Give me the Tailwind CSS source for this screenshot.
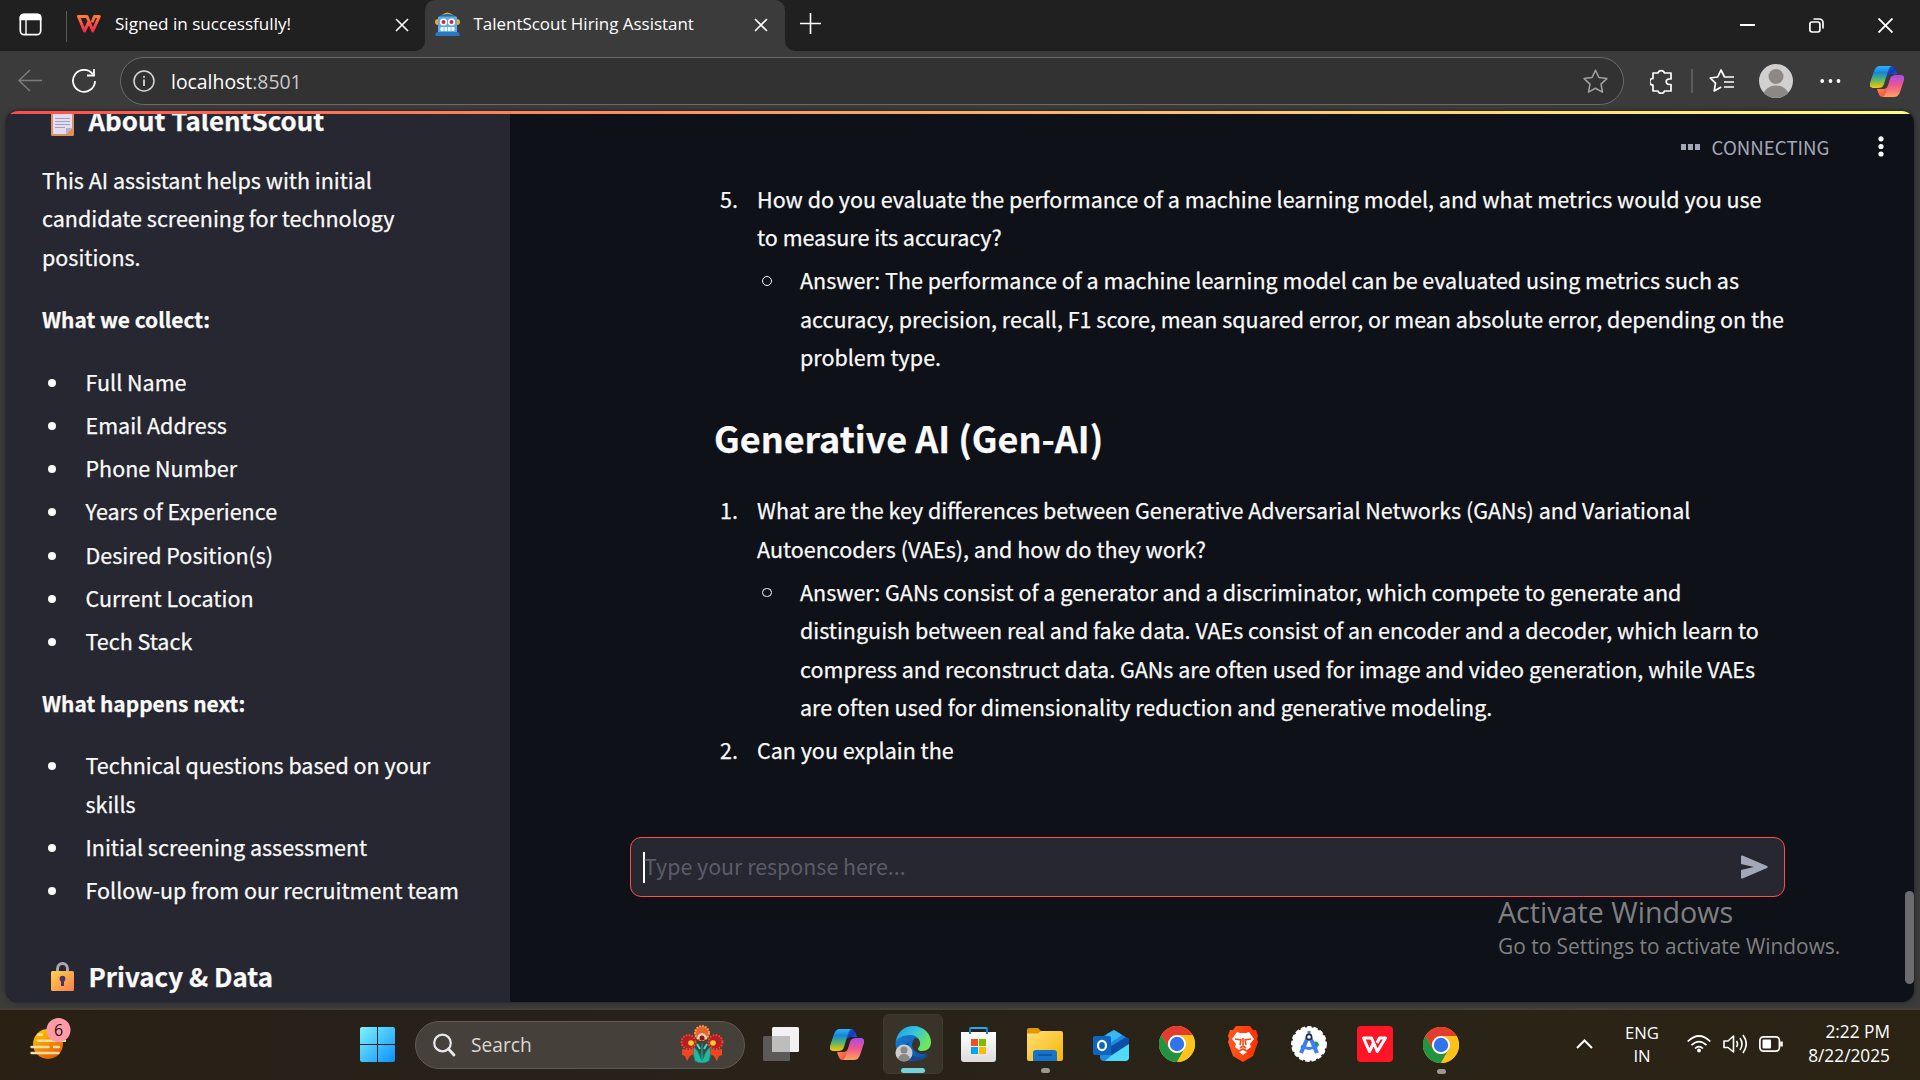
<!DOCTYPE html>
<html lang="en">
<head>
<meta charset="utf-8">
<title>TalentScout Hiring Assistant</title>
<script src="https://cdn.jsdelivr.net/npm/@tailwindcss/browser@4"></script>
</head>
<body class="flex h-[1080px] w-[1920px] flex-col overflow-hidden bg-[#3b3b3b] font-['Open_Sans',sans-serif] text-white">

<svg class="absolute size-0" aria-hidden="true">
  <defs>
    <linearGradient id="cpA" x1="0" y1="0" x2="0" y2="1"><stop offset="0" stop-color="#2fb4f5"/><stop offset=".3" stop-color="#1585dc"/><stop offset=".62" stop-color="#58b56b"/><stop offset="1" stop-color="#ffc800"/></linearGradient>
    <linearGradient id="cpB" x1="0" y1="0" x2="0" y2="1"><stop offset="0" stop-color="#a44cf0"/><stop offset=".45" stop-color="#ee5590"/><stop offset="1" stop-color="#ffa060"/></linearGradient>
    <linearGradient id="cpC" x1="0" y1="0" x2="1" y2="1"><stop offset="0" stop-color="#1670e0"/><stop offset=".5" stop-color="#1438b8"/><stop offset="1" stop-color="#3a66f0"/></linearGradient>
    <linearGradient id="cpD" x1="0" y1="0" x2="1" y2="1"><stop offset="0" stop-color="#ff9a5c"/><stop offset="1" stop-color="#f0403c"/></linearGradient>
    <linearGradient id="win" gradientUnits="userSpaceOnUse" x1="0" y1="0" x2="35" y2="35"><stop offset="0" stop-color="#7df3ff"/><stop offset="1" stop-color="#0a90ff"/></linearGradient>
    <linearGradient id="sun" x1="0" y1="0" x2=".6" y2="1"><stop offset="0" stop-color="#ffd400"/><stop offset="1" stop-color="#e85e00"/></linearGradient>
    <linearGradient id="lock" x1="0" y1="0" x2="1" y2="1"><stop offset="0" stop-color="#ffd24a"/><stop offset="1" stop-color="#f97d4e"/></linearGradient>
    <linearGradient id="edgeTop" x1="0" y1="0" x2="1" y2=".5"><stop offset="0" stop-color="#1f9bdc"/><stop offset=".5" stop-color="#33c3e0"/><stop offset="1" stop-color="#6fe957"/></linearGradient>
    <linearGradient id="edgeBody" x1="0" y1="0" x2="1" y2="1"><stop offset="0" stop-color="#1683d8"/><stop offset="1" stop-color="#0f4fa5"/></linearGradient>
    <linearGradient id="folder" x1="0" y1="0" x2="1" y2="1"><stop offset="0" stop-color="#ffe07a"/><stop offset="1" stop-color="#f8b400"/></linearGradient>
    <linearGradient id="bag" x1="0" y1="0" x2="0" y2="1"><stop offset="0" stop-color="#fff"/><stop offset="1" stop-color="#dcdcdc"/></linearGradient>
    <linearGradient id="brave" x1="0" y1="0" x2="1" y2="0"><stop offset="0" stop-color="#ff5a1f"/><stop offset="1" stop-color="#ff2e00"/></linearGradient>
    <linearGradient id="wps" x1="0" y1="0" x2="0" y2="1"><stop offset="0" stop-color="#ff7a3c"/><stop offset="1" stop-color="#f5284c"/></linearGradient>
    <symbol id="copilot" viewBox="0 0 34 31">
      <path d="M17 0h4c3 0 4 2 5 5l1 3h-6c-3 0-5 2-6 5z" fill="url(#cpC)"/>
      <path d="M17 31h-4c-3 0-4-2-5-5l-1-3h6c3 0 5-2 6-5z" fill="url(#cpD)"/>
      <path d="M10 0h12c-2 0-3 2-4 5l-4 13c-1 3-3 4-6 4H4c-3 0-5-1-4-5L4 5c1-3 3-5 6-5z" fill="url(#cpA)"/>
      <path d="M24 31H12c2 0 3-2 4-5l4-13c1-3 3-4 6-4h4c3 0 5 1 4 5l-4 12c-1 3-3 5-6 5z" fill="url(#cpB)"/>
    </symbol>
    <symbol id="chrome" viewBox="0 0 36 36">
      <circle cx="18" cy="18" r="18" fill="#fbbc04"/>
      <path d="M2.4 9A18 18 0 0 1 33.6 9H18a9 9 0 0 0-7.8 13.5z" fill="#e33b2e"/>
      <path d="M2.4 9A18 18 0 0 0 18 36l7.8-13.5a9 9 0 0 1-15.6 0z" fill="#229342"/>
      <path d="M33.6 9A18 18 0 0 1 18 36l7.8-13.5A9 9 0 0 0 18 9z" fill="#fcc31c"/>
      <circle cx="18" cy="18" r="9" fill="#fff"/><circle cx="18" cy="18" r="7.2" fill="#2f74e8"/>
    </symbol>
    <symbol id="x" viewBox="0 0 14 14"><path d="M1 1l12 12M13 1L1 13" fill="none" stroke="currentColor" stroke-width="1.6"/></symbol>
  </defs>
</svg>

<!-- Tab strip -->
<header class="flex h-[51px] shrink-0 bg-[#202020]">
  <div class="flex w-[66px] items-center pl-[19px] pb-[3px]">
    <svg class="h-[23px] w-[23px]" viewBox="0 0 23 23" fill="none" stroke="#fff" stroke-width="1.7"><rect x="1.3" y="1.3" width="20.4" height="20.4" rx="4"/><path d="M1.5 3.5Q2 1.5 4 1.5h15q2.500 0 2.500 2v3h-20z" fill="#fff"/><path d="M7 7v14" stroke-width="1.4"/></svg>
  </div>
  <div class="mt-[11px] h-[31px] w-px bg-[#5a5a5a]"></div>
  <div class="flex h-[48px] w-[358px] items-center pl-[10px]">
    <svg class="mb-px h-[18px] w-[24px]" viewBox="0 0 24 18" fill="none" stroke="url(#wps)" stroke-width="3" stroke-linejoin="round"><path d="M12 6.500L7.500 16 1.500 1.500H10L15.800 16 22.300 1.500H17.500L15 7.500"/></svg>
    <span class="ml-[14px] w-[281px] text-[17.100px] leading-6">Signed in successfully!</span>
    <svg class="mt-[2px] size-[14px] shrink-0 -ml-[1px]"><use href="#x"/></svg>
  </div>
  <div class="relative flex h-[51px] w-[360px] rounded-t-[10px] bg-[#3b3b3b] pb-[3px]">
    <svg class="absolute bottom-0 -left-[10px] size-[10px]" viewBox="0 0 10 10"><path d="M10 0v10H0A10 10 0 0 0 10 0z" fill="#3b3b3b"/></svg>
    <svg class="absolute bottom-0 -right-[10px] size-[10px]" viewBox="0 0 10 10"><path d="M0 0v10h10A10 10 0 0 1 0 0z" fill="#3b3b3b"/></svg>
    <div class="flex items-center pl-[10px]">
      <svg class="h-[24px] w-[25px]" viewBox="0 0 25 24"><path d="M7 3q5.500-5 11 0z" fill="#f2a72e"/><circle cx="3" cy="10" r="3" fill="#f2a72e"/><circle cx="22" cy="10" r="3" fill="#f2a72e"/><path d="M3 5q9.500-6 19 0v15H3z" fill="#58aeea"/><path d="M4 4.500Q12.500-.5 21 4.500z" fill="#28669e"/><path d="M.5 24v-2q0-2 3-2h18q3 0 3 2v2z" fill="#2a78c0"/><circle cx="8.500" cy="10" r="3.600" fill="#fff"/><circle cx="16.500" cy="10" r="3.600" fill="#fff"/><circle cx="8.500" cy="10" r="2" fill="#d8233c"/><circle cx="16.500" cy="10" r="2" fill="#d8233c"/><rect x="5.500" y="15" width="14" height="4" rx="1" fill="#fff"/><path d="M9 15v4m3.500-4v4m3.500-4v4" stroke="#58aeea" stroke-width=".8"/></svg>
      <span class="ml-[13.500px] w-[280.500px] text-[16.940px] leading-6">TalentScout Hiring Assistant</span>
      <svg class="mt-[2px] size-[14px] shrink-0"><use href="#x"/></svg>
    </div>
  </div>
  <svg class="ml-[15px] mt-[13px] size-[21px]" viewBox="0 0 21 21" stroke="#fff" stroke-width="1.600"><path d="M10.500 0v21M0 10.500h21"/></svg>
  <div class="mr-[27px] mb-px ml-auto flex items-center gap-[54px]">
    <svg class="size-[15px]" viewBox="0 0 15 15" stroke="#fff" stroke-width="2"><path d="M0 7h15"/></svg>
    <svg class="size-[15px]" viewBox="0 0 15 15" fill="none" stroke="#fff" stroke-width="1.700"><rect x=".9" y="4" width="10" height="10" rx="2.200"/><path d="M4.500 1h5.500q4 0 4 4v5.500"/></svg>
    <svg class="size-[15px]" viewBox="0 0 15 15" stroke="#fff" stroke-width="1.900"><path d="M.5.5l14 14M14.500.5L.5 14.500"/></svg>
  </div>
</header>

<!-- Toolbar -->
<div class="flex h-[60px] shrink-0 items-center pl-[18px]">
  <svg class="h-[24px] w-[24px] shrink-0" viewBox="0 0 24 24" fill="none" stroke="#7c7c7c" stroke-width="1.500"><path d="M24 11.500H1M12 1L1 11.500 12 22"/></svg>
  <svg class="ml-[30px] size-[24px] shrink-0" viewBox="0 0 24 24" fill="none" stroke="#fff" stroke-width="1.800"><path d="M21 5.500A11 11 0 1 0 23 12"/><path d="M22 0v6.500h-7"/></svg>
  <div class="ml-[24px] flex h-[48px] w-[1504px] shrink-0 items-center rounded-full border-[1.500px] border-[#6a6a6a] bg-[#323232] pl-[12px]">
    <svg class="size-[22px]" viewBox="0 0 22 22" fill="none" stroke="#d8d8d8" stroke-width="1.500"><circle cx="11" cy="11" r="10"/><path d="M11 9.500v6.500M11 6v1.800" stroke-width="1.800"/></svg>
    <span class="ml-[16px] pt-px text-[19.400px] leading-7">localhost<span class="text-[#c9c9c9]">:8501</span></span>
    <svg class="mr-[15px] ml-auto size-[25px]" viewBox="0 0 24 24" fill="none" stroke="#a0a0a0" stroke-width="1.500" stroke-linejoin="round"><path d="M12 1.200l3.300 7 7.600 1-5.600 5.300 1.400 7.700-6.700-3.700-6.700 3.700 1.400-7.700L1.100 9.200l7.600-1z"/></svg>
  </div>
  <svg class="ml-[26px] h-[25px] w-[22px] shrink-0" viewBox="0 0 22 25" fill="none" stroke="#fff" stroke-width="1.700" stroke-linejoin="round"><path d="M3 4h5a3.400 3.400 0 0 1 6.500 0H21v6h-2a2.600 2.600 0 0 0 0 5.500h2V22h-6.500a3.400 3.400 0 0 1-6.500 0H3v-6a3.200 3.200 0 0 1 0-6.500z"/></svg>
  <div class="ml-[19px] h-[24px] w-[2px] shrink-0 bg-[#5c5c5c]"></div>
  <svg class="ml-[16px] h-[24px] w-[25px] shrink-0" viewBox="0 0 25 24" fill="none" stroke="#fff" stroke-width="1.700" stroke-linejoin="round"><path d="M22 8h-6.500L12 1 8.700 8l-7.500 1 5.300 5.200L5.200 22l7-4M16 8h9M15 13h10M15 18h10"/></svg>
  <svg class="ml-[25px] size-[34px] shrink-0" viewBox="0 0 34 34"><defs><clipPath id="av"><circle cx="17" cy="17" r="17"/></clipPath></defs><g clip-path="url(#av)"><path d="M0 0h34v34H0z" fill="#d2d0ce"/><circle cx="17" cy="12.500" r="7.500" fill="#8c8886"/><ellipse cx="17" cy="33" rx="13" ry="11.500" fill="#8c8886"/></g></svg>
  <svg class="ml-[27px] h-[4px] w-[21px] shrink-0" viewBox="0 0 21 4" fill="#fff"><circle cx="2.200" cy="2" r="1.900"/><circle cx="10.500" cy="2" r="1.900"/><circle cx="18.500" cy="2" r="1.900"/></svg>
  <svg class="ml-[29px] h-[31px] w-[34px] shrink-0"><use href="#copilot"/></svg>
</div>

<!-- Page viewport -->
<div class="relative mx-[6px] flex h-[891px] shrink-0 overflow-hidden rounded-[12px] bg-[#0e1117] font-['Noto_Sans_CJK_SC','Noto_Sans',sans-serif] text-[21.500px] leading-[38.400px] text-[#fafafa] shadow-[0_0_4px_rgba(0,0,0,0.5)]">
  <div class="absolute inset-x-0 top-0 z-10 h-[3px] bg-linear-to-r from-[#ff4b4b] to-[#fffd80]"></div>

  <aside class="w-[504px] shrink-0 bg-[#262730] pl-[36px] [-webkit-text-stroke:0.25px]">
    <div class="-mt-[9.300px] flex h-[36px]">
      <svg class="mt-[5px] ml-[9px] h-[29px] w-[23px]" viewBox="0 0 23 29"><rect width="23" height="29" rx="1.500" fill="#dd925c"/><path d="M2 3h19v18l-6 6H2z" fill="#e4dcf0"/><path d="M15 27v-6h6z" fill="#b9aed0"/><path d="M4 11.500h15M4 14.500h15M4 17.500h15M4 20.500h10" stroke="#a89fb8" stroke-width="1.200"/></svg>
      <h2 class="ml-[14.500px] text-[25.900px] leading-[36px] font-bold">About TalentScout</h2>
    </div>
    <p class="mt-[23.300px] w-[400px]">This AI assistant helps with initial candidate screening for technology positions.</p>
    <p class="mt-[23.800px] text-[20.900px] font-bold">What we collect:</p>
    <ul class="mt-[24.400px] flex flex-col gap-[4.800px] pl-[6px]">
      <li class="flex"><span class="mt-[16px] mr-[29.500px] size-[8px] shrink-0 rounded-full bg-[#fafafa]"></span><span>Full Name</span></li>
      <li class="flex"><span class="mt-[16px] mr-[29.500px] size-[8px] shrink-0 rounded-full bg-[#fafafa]"></span><span>Email Address</span></li>
      <li class="flex"><span class="mt-[16px] mr-[29.500px] size-[8px] shrink-0 rounded-full bg-[#fafafa]"></span><span>Phone Number</span></li>
      <li class="flex"><span class="mt-[16px] mr-[29.500px] size-[8px] shrink-0 rounded-full bg-[#fafafa]"></span><span>Years of Experience</span></li>
      <li class="flex"><span class="mt-[16px] mr-[29.500px] size-[8px] shrink-0 rounded-full bg-[#fafafa]"></span><span>Desired Position(s)</span></li>
      <li class="flex"><span class="mt-[16px] mr-[29.500px] size-[8px] shrink-0 rounded-full bg-[#fafafa]"></span><span>Current Location</span></li>
      <li class="flex"><span class="mt-[16px] mr-[29.500px] size-[8px] shrink-0 rounded-full bg-[#fafafa]"></span><span>Tech Stack</span></li>
    </ul>
    <p class="mt-[23.400px] text-[20.900px] font-bold">What happens next:</p>
    <ul class="mt-[24px] flex flex-col gap-[4.800px] pl-[6px]">
      <li class="flex"><span class="mt-[16px] mr-[29.500px] size-[8px] shrink-0 rounded-full bg-[#fafafa]"></span><span class="w-[380px]">Technical questions based on your<br>skills</span></li>
      <li class="flex"><span class="mt-[16px] mr-[29.500px] size-[8px] shrink-0 rounded-full bg-[#fafafa]"></span><span>Initial screening assessment</span></li>
      <li class="flex"><span class="mt-[16px] mr-[29.500px] size-[8px] shrink-0 rounded-full bg-[#fafafa]"></span><span>Follow-up from our recruitment team</span></li>
    </ul>
    <div class="mt-[49px] flex h-[36px]">
      <svg class="mt-[4px] ml-[9px] h-[29px] w-[23px]" viewBox="0 0 23 29"><path d="M6.500 10V7a5 5.500 0 0 1 10 0v3" fill="none" stroke="#aca5b8" stroke-width="3"/><rect y="9" width="23" height="20" rx="1.500" fill="url(#lock)"/><circle cx="11.500" cy="16.700" r="2.900" fill="#4a3468"/><path d="M10 17h3v7h-3z" fill="#4a3468"/></svg>
      <h2 class="ml-[14.500px] text-[25.900px] leading-[36px] font-bold">Privacy &amp; Data</h2>
    </div>
  </aside>

  <main class="relative flex-1">
    <div class="absolute top-[22px] right-[30px] flex h-[28px] items-center">
      <div class="flex gap-[2px]"><i class="h-[6px] w-[5px] bg-[#a3a8b8]"></i><i class="h-[6px] w-[5px] bg-[#a3a8b8]"></i><i class="h-[6px] w-[5px] bg-[#a3a8b8]"></i></div>
      <span class="ml-[11.500px] text-[18.720px] leading-[28px] text-[#a3a8b8]">CONNECTING</span>
      <svg class="mb-px ml-[48.500px] h-[21px] w-[6px]" viewBox="0 0 6 21" fill="#fff"><circle cx="3" cy="2.800" r="2.600"/><circle cx="3" cy="10.500" r="2.600"/><circle cx="3" cy="18" r="2.600"/></svg>
    </div>

    <section class="pt-[68.800px] pl-[204px] [-webkit-text-stroke:0.25px]">
      <div class="grid grid-cols-[43px_1040px]">
        <span class="pl-[6px]">5.</span>
        <div>
          <p>How do you evaluate the performance of a machine learning model, and what metrics would you use<br>to measure its accuracy?</p>
          <div class="mt-[4.800px] flex"><span class="mt-[15px] mr-[28.500px] ml-[5px] h-[9.500px] w-[9.500px] shrink-0 rounded-full border border-[#fafafa]"></span><p>Answer: The performance of a machine learning model can be evaluated using metrics such as<br>accuracy, precision, recall, F1 score, mean squared error, or mean absolute error, depending on the<br>problem type.</p></div>
        </div>
      </div>
      <h1 class="mt-[39px] text-[35.950px] leading-[43px] font-bold">Generative AI (Gen-AI)</h1>
      <div class="mt-[32.700px] grid grid-cols-[43px_1040px] gap-y-[4.800px]">
        <span class="pl-[6px]">1.</span>
        <div>
          <p>What are the key differences between Generative Adversarial Networks (GANs) and Variational<br>Autoencoders (VAEs), and how do they work?</p>
          <div class="mt-[4.800px] flex"><span class="mt-[15px] mr-[28.500px] ml-[5px] h-[9.500px] w-[9.500px] shrink-0 rounded-full border border-[#fafafa]"></span><p>Answer: GANs consist of a generator and a discriminator, which compete to generate and<br>distinguish between real and fake data. VAEs consist of an encoder and a decoder, which learn to<br>compress and reconstruct data. GANs are often used for image and video generation, while VAEs<br>are often used for dimensionality reduction and generative modeling.</p></div>
        </div>
        <span class="pl-[6px]">2.</span>
        <p>Can you explain the</p>
      </div>
    </section>

    <div class="mt-[67.300px] ml-[120px] flex h-[60px] w-[1155px] items-center rounded-[11px] border border-[#ff4b4b] bg-[#262730] pr-[16px] pl-[12px]">
      <span class="h-[31px] w-[2px] bg-white"></span>
      <span class="-ml-px pb-[2px] text-[21.400px] text-[#5b5c68]">Type your response here...</span>
      <svg class="ml-auto h-[24px] w-[27px]" viewBox="0 0 27 24"><path d="M0 1.500Q0 0 1.500.5L26 11q1.500 1 0 2L1.500 23.500Q0 24 0 22.500V15l13-3L0 9z" fill="#a3a8b8"/></svg>
    </div>
    <div class="absolute top-[780px] right-0 h-[93px] w-[9px] rounded-full bg-[#6b6b70]"></div>
    <div class="absolute top-[781px] left-[988px] font-['Open_Sans',sans-serif] text-[#7f8081]">
      <p class="text-[28.650px] leading-[39px] whitespace-nowrap">Activate Windows</p>
      <p class="text-[20.900px] leading-[30px] whitespace-nowrap">Go to Settings to activate Windows.</p>
    </div>
  </main>
</div>
<div class="h-[6px] shrink-0"></div>

<!-- Taskbar -->
<footer class="flex h-[72px] shrink-0 items-center border-t-2 border-[#474038] bg-linear-to-r from-[#2a2014] via-[#28211a] via-20% to-[#2b2415]">
  <svg class="mb-[12px] ml-[29px] h-[44px] w-[43px] shrink-0" viewBox="0 0 43 44"><circle cx="19" cy="27" r="15" fill="url(#sun)"/><g stroke="#f6dda6" stroke-width="2.400" stroke-linecap="round"><path d="M9 17.700h4M9 23.700h27M2.500 30h17M25 30h5M2.500 36h27"/></g><circle cx="29.500" cy="13" r="12" fill="#ff9aa6"/><text x="29.500" y="18.500" text-anchor="middle" font-size="16" fill="#1a1010" font-family="Open Sans">6</text></svg>
  <svg class="mb-px ml-[288px] size-[35px] shrink-0" viewBox="0 0 35 35" fill="url(#win)"><path d="M2 0h15v17H0V2q0-2 2-2zM18 0h15q2 0 2 2v15H18zM0 18h17v17H2q-2 0-2-2zM18 18h17v15q0 2-2 2H18z"/></svg>
  <div class="mb-px ml-[20px] flex h-[48px] w-[330px] shrink-0 items-center rounded-full border border-[#5e5a54] bg-[#454039] pl-[16px]">
    <svg class="size-[24px]" viewBox="0 0 24 24" fill="none" stroke="#e8e8ee"><circle cx="10.500" cy="10" r="8.300" stroke-width="2.200"/><path d="M16.500 16l5.500 6" stroke-width="2.800" stroke-linecap="round"/></svg>
    <span class="ml-[15px] text-[19.200px] leading-7 text-[#d9d7d4]">Search</span>
    <svg class="mr-[20px] ml-auto mb-[2px] h-[38px] w-[44px]" viewBox="0 0 44 38"><path d="M22 36V18M15 36q-3-8-1-14 5 4 7 12 0-10 1-16 1 6 1 16 2-8 7-12 2 6-1 14-7 4-14 0z" fill="#22b89c" stroke="#147f78" stroke-width=".8"/><path d="M2 24l7 1 4-2 1 6-4 2-3 5-2-5-3-1zM42 24l-7 1-4-2-1 6 4 2 3 5 2-5 3-1z" fill="#f0451f"/><circle cx="8.500" cy="17" r="7.500" fill="#b81d26"/><circle cx="35.500" cy="17" r="7.500" fill="#b81d26"/><circle cx="8.500" cy="17" r="7" fill="none" stroke="#e84a35" stroke-width="2" stroke-dasharray="1.500 1.500"/><circle cx="35.500" cy="17" r="7" fill="none" stroke="#e84a35" stroke-width="2" stroke-dasharray="1.500 1.500"/><circle cx="11" cy="18" r="2.800" fill="#ffcf24"/><circle cx="33" cy="18" r="2.800" fill="#ffcf24"/><circle cx="22" cy="8.500" r="7.500" fill="#e8642a"/><circle cx="22" cy="8" r="7" fill="none" stroke="#ffa45c" stroke-width="2" stroke-dasharray="1.500 1.500"/><path d="M17 14q0-5 5-6 5 1 5 6z" fill="#fbd9b0"/><circle cx="22" cy="13" r="2.500" fill="#8a1820"/><path d="M17 19l3 5M27 19l-3 5" stroke="#3fe0c8" stroke-width="2"/></svg>
  </div>

  <div class="ml-[3px] flex h-full items-center">
    <div class="flex w-[66px] justify-center"><svg class="mb-[2px] h-[34px] w-[36px]" viewBox="0 0 36 34"><rect y="9" width="27" height="25" rx="1.500" fill="#5c5a58"/><rect x="9" width="27" height="25" rx="1.500" fill="#f2f2f2"/><rect x="9" y="9" width="18" height="16" fill="#bdbdbd"/></svg></div>
    <div class="flex w-[66px] justify-center"><svg class="mb-px h-[31px] w-[34px]"><use href="#copilot"/></svg></div>
    <div class="flex w-[66px] justify-center">
      <div class="mb-[2px] flex h-[60px] w-[60px] flex-col items-center rounded-[6px] border border-[#413a30] bg-[#39332a] pt-[11px]">
        <svg class="size-[36px]" viewBox="0 0 36 36"><circle cx="17.500" cy="18" r="17" fill="url(#edgeBody)"/><path d="M17 20q0-5 3-8 7 0 7 6-3 4 1 6 4 1 7-2v5l-7 1q-9 0-11-8z" fill="#39332a"/><path d="M1 15C3 5 10 0 18 0c11 0 18 8 18 16 0 6-4 9-9 9-4 0-5-2-3-4 3-4 0-12-9-12C8 9 3 12 1 15z" fill="url(#edgeTop)"/><path d="M14 16q-4 9 4 14 8 3 16-3-4 8-14 8-10-1-12-10 0-6 6-9z" fill="#164a92"/><circle cx="9" cy="27" r="8.500" fill="#cfcdcb"/><circle cx="9" cy="24" r="3.600" fill="#8b8785"/><path d="M3 33q1-5 6-5t6 5q-6 5-12 0z" fill="#8b8785"/></svg>
        <span class="mt-[6px] h-[5px] w-[24px] rounded-full bg-[#76d2da]"></span>
      </div>
    </div>
    <div class="flex w-[66px] justify-center"><svg class="mr-px mb-[2px] size-[35px]" viewBox="0 0 35 35"><path d="M9 8V2q0-1 1-1h15q1 0 1 1v6" fill="none" stroke="#2aa8e8" stroke-width="2"/><path d="M0 5h35v27q0 3-3 3H3q-3 0-3-3z" fill="url(#bag)"/><path d="M9 1v6M26 1v6" stroke="#1682c8" stroke-width="2"/><path d="M10 12h7v7h-7z" fill="#f25022"/><path d="M18 12h7v7h-7z" fill="#7fba00"/><path d="M10 20h7v7h-7z" fill="#00a4ef"/><path d="M18 20h7v7h-7z" fill="#ffb900"/></svg></div>
    <div class="flex w-[66px] flex-col items-center"><svg class="mt-[11px] h-[33px] w-[36px]" viewBox="0 0 36 33"><path d="M0 2q0-2 2-2h9l3.500 3.500H34V12H0z" fill="#e09a00"/><path d="M0 5.500h11l3-2.500h20q2 0 2 2v26q0 2-2 2H2q-2 0-2-2z" fill="url(#folder)"/><path d="M6 33v-8q0-3 3-3h18q3 0 3 3v8z" fill="#1673cc"/><path d="M11 27h14" stroke="#0b4d96" stroke-width="1.500"/></svg><span class="mt-[7px] h-[5px] w-[9px] rounded-full bg-[#9a9794]"></span></div>
    <div class="flex w-[66px] justify-center"><svg class="h-[31px] w-[36px]" viewBox="0 0 36 31"><path d="M7 8L21 0l15 9v18q0 4-4 4H11q-4 0-4-4z" fill="#1f8be0"/><path d="M14 4l7-4 8 5-13 9-6-3z" fill="#36b8f4"/><path d="M17 17L33 7l3 2v6L18 26z" fill="#0d4ea8"/><path d="M36 14v13q0 4-4 4H12l7-6z" fill="#4fdaf8"/><rect y="6" width="18" height="19" rx="2" fill="#0f66c0"/><ellipse cx="9" cy="15.500" rx="4" ry="4.600" fill="none" stroke="#fff" stroke-width="2.200"/></svg></div>
    <div class="flex w-[66px] justify-center"><svg class="mb-[2px] size-[36px]"><use href="#chrome"/></svg></div>
    <div class="flex w-[66px] justify-center"><svg class="mb-[2px] h-[36px] w-[30px]" viewBox="0 0 30 36"><path d="M8 0h14l3 4h3l2 6-1 3 1 3-5 14-10 6-10-6L0 16l1-3-1-3 2-6h3z" fill="url(#brave)"/><path d="M9 6l3 1h6l3-1 5 7-4 5 1 3-4 3-4-2-4 2-4-3 1-3-4-5z" fill="#fff"/><path d="M7 13l6 1-1 5M23 13l-6 1 1 5M15 12v8M12 22l3-2 3 2" fill="none" stroke="#ff4a14" stroke-width="1.600"/><path d="M11 26l4-2 4 2-4 3z" fill="#fff"/></svg></div>
    <div class="flex w-[66px] justify-center"><svg class="mb-[2px] size-[36px]" viewBox="0 0 36 36"><circle cx="18" cy="18" r="16.800" fill="#fff" stroke="#fff" stroke-width="2.200" stroke-dasharray="4.400 2"/><path d="M22 16q5-2 6 3-1 3-6 2z" fill="#1f9a50"/><path d="M17 11L10 27M19 11l7 16" stroke="#3f7df0" stroke-width="4"/><path d="M10 20q8 5 16 0" fill="none" stroke="#3f7df0" stroke-width="3"/><path d="M18 5v4" stroke="#3f7df0" stroke-width="3"/><circle cx="18" cy="11" r="2.600" fill="#fff" stroke="#222c38" stroke-width="1.600"/></svg></div>
    <div class="flex w-[66px] justify-center"><svg class="mb-[2px] size-[36px]" viewBox="0 0 36 36"><rect width="36" height="36" rx="4" fill="#ff1526"/><path d="M17 16l-4.500 9.500L6.500 12h8l5.800 13.500L28.500 12h-6l-2.500 5" fill="none" stroke="#fff" stroke-width="3" stroke-linejoin="round"/></svg></div>
    <div class="flex w-[66px] flex-col items-center"><svg class="mt-[10px] size-[36px]"><use href="#chrome"/></svg><span class="mt-[6px] h-[5px] w-[9px] rounded-full bg-[#9a9794]"></span></div>
  </div>

  <div class="mr-[30px] ml-auto flex items-center pb-[3px]">
    <svg class="h-[10px] w-[17px]" viewBox="0 0 17 10" fill="none" stroke="#fff" stroke-width="2"><path d="M1 9l7.500-7.500L16 9"/></svg>
    <div class="ml-[31px] w-[36px] text-center text-[16.700px] leading-[23px]">ENG<br>IN</div>
    <svg class="ml-[27px] h-[18px] w-[24px]" viewBox="0 0 24 18" fill="none" stroke="#fff" stroke-width="1.700"><path d="M.7 6.500q11.300-11 22.600 0M4.500 10.200q7.500-7.300 15 0M8 13.500q4-3.800 8 0"/><circle cx="12" cy="15.500" r="1.900" fill="#fff" stroke="none"/></svg>
    <svg class="ml-[12px] h-[20px] w-[24px]" viewBox="0 0 24 20" fill="none" stroke="#fff" stroke-width="1.600" stroke-linejoin="round"><path d="M1 7h4l5.500-5v16L5 13.500H1zM13.500 7q2 3 0 6M17 4q4 6 0 12M20 1q6.500 9 0 18"/></svg>
    <svg class="ml-[12px] h-[16px] w-[24px]" viewBox="0 0 24 16" fill="none" stroke="#fff" stroke-width="1.700"><rect x=".9" y=".9" width="19.500" height="14.200" rx="3.500"/><rect x="3.500" y="3.500" width="8.500" height="9" rx="1" fill="#fff" stroke="none"/><path d="M22.500 5.500v5" stroke-width="2.600"/></svg>
    <div class="w-[107px] text-right text-[17.300px] leading-[24px]">2:22 PM<br>8/22/2025</div>
  </div>
</footer>
</body>
</html>
